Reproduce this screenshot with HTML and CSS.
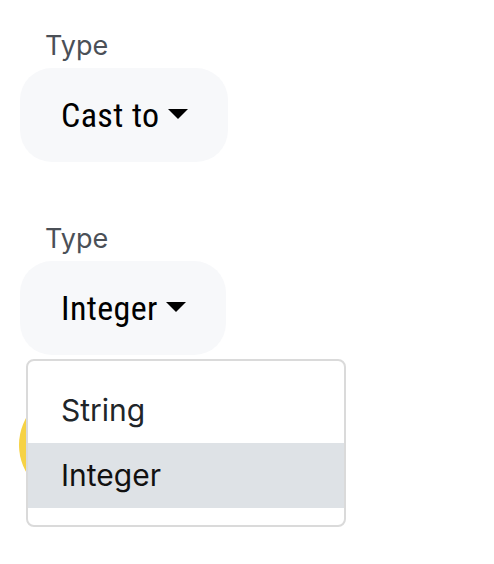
FILE: index.html
```html
<!DOCTYPE html>
<html lang="en">
<head>
<meta charset="utf-8">
<title>Type dropdowns</title>
<link rel="stylesheet" href="styles.css">
</head>
<body>
<div class="page">
  <div class="field">
    <div class="label">Type</div>
    <button class="toggle" type="button"><span class="toggle-text">Cast to</span><span class="caret"></span></button>
  </div>

  <div class="field second">
    <div class="label">Type</div>
    <div class="dropdown">
      <button class="toggle" type="button"><span class="toggle-text">Integer</span><span class="caret"></span></button>
      <div class="menu">
        <div class="item">String</div>
        <div class="item active">Integer</div>
      </div>
    </div>
    <div class="blob"></div>
  </div>
</div>
</body>
</html>
```

FILE: styles.css
```css
html, body {
  margin: 0;
  padding: 0;
  background: #ffffff;
}

.page {
  min-height: 564px;
  box-sizing: border-box;
  padding: 30px 0 0 20px;
  font-family: "Inter", "Noto Sans", sans-serif;
}

.field {
  display: flex;
  flex-direction: column;
  align-items: flex-start;
}

.second {
  margin-top: 61px;
}

.label {
  margin-left: 25px;
  font-size: 27px;
  line-height: 31px;
  color: #4b5057;
  margin-bottom: 7px;
}

.toggle {
  display: inline-flex;
  align-items: center;
  height: 94px;
  padding: 0 40px 0 41px;
  border: none;
  border-radius: 32px;
  background: #f7f8fa;
  color: #000;
  font-family: "Roboto", sans-serif;
  font-stretch: condensed;
  font-size: 34px;
  letter-spacing: 0.4px;
  cursor: pointer;
}

.toggle-text {
  line-height: normal;
}

.caret {
  display: inline-block;
  width: 0;
  height: 0;
  margin-left: 8px;
  margin-top: -3px;
  border-top: 10px solid #000;
  border-left: 10px solid transparent;
  border-right: 10px solid transparent;
}

.dropdown {
  position: relative;
}

.menu {
  position: absolute;
  top: 98px;
  left: 6px;
  width: 316px;
  padding: 17px 0 17px;
  border: 2px solid #dadada;
  border-radius: 8px;
  background: #ffffff;
  z-index: 2;
}

.item {
  height: 65px;
  line-height: 65px;
  padding-left: 33px;
  font-size: 30px;
  color: #212529;
}

.item.active {
  background: #dee2e6;
  color: #111;
}

.blob {
  width: 110px;
  height: 110px;
  margin-top: 35px;
  margin-left: -1px;
  border-radius: 50%;
  background: #f6d245;
}
```
